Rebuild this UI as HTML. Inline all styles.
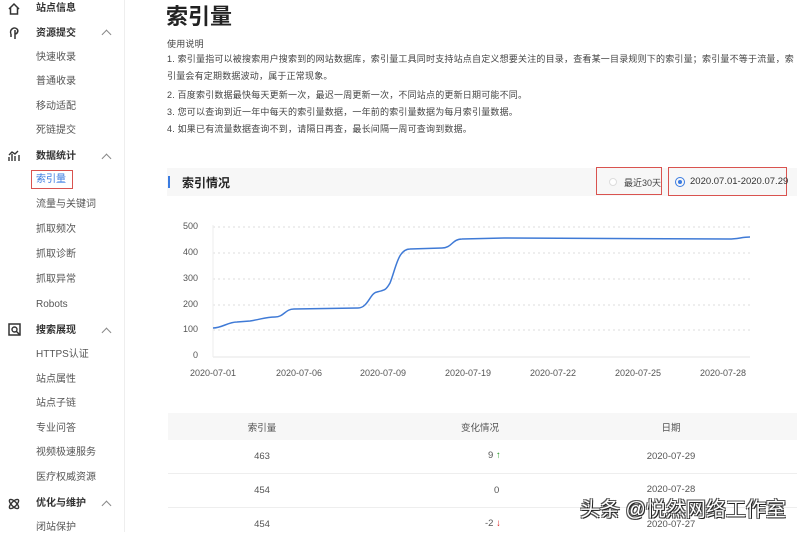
<!DOCTYPE html>
<html><head><meta charset="utf-8"><style>
*{margin:0;padding:0;box-sizing:border-box}
body{width:800px;height:532px;overflow:hidden;background:#fff;font-family:"Liberation Sans","Noto Sans CJK SC",sans-serif;color:#333;position:relative}
.a{position:absolute;white-space:nowrap}
.sb{position:absolute;left:0;top:0;width:125px;height:532px;border-right:1px solid #eee}
.it{position:absolute;left:36px;font-size:10px;color:#555;line-height:12px}
.g{font-weight:bold;color:#333}
.ch{position:absolute;left:103px;width:7px;height:7px;border-left:1px solid #888;border-top:1px solid #888;transform:rotate(45deg)}
.ins{font-size:9px;color:#444;left:167px;letter-spacing:0.2px}
.yl{font-size:9px;color:#555;text-align:right;width:30px;left:168px}
.xl{font-size:9px;color:#555;width:60px;text-align:center}
.td{font-size:9.5px;color:#555;width:80px;text-align:center}
</style></head><body>
<div class="sb">
<svg class="a" style="left:7px;top:2px" width="14" height="14" viewBox="0 0 14 14"><path d="M2 7 L7 2 L12 7 M3.5 6 V12 H10.5 V6" fill="none" stroke="#333" stroke-width="1.5"/></svg>
<div class="it g" style="top:3px">站点信息</div>
<svg class="a" style="left:8px;top:26px" width="14" height="14" viewBox="0 0 14 14"><path d="M3 8 C1 4 6 0 9 3 C11 5 9 8 7 8 M7 4 V13 M3 8 V11" fill="none" stroke="#333" stroke-width="1.5"/></svg>
<div class="it g" style="top:28px">资源提交</div><div class="ch" style="top:31px"></div>
<div class="it" style="top:52px">快速收录</div>
<div class="it" style="top:76px">普通收录</div>
<div class="it" style="top:101px">移动适配</div>
<div class="it" style="top:125px">死链提交</div>
<svg class="a" style="left:8px;top:150px" width="14" height="12" viewBox="0 0 14 12"><path d="M1 11 V7 M4 11 V4 M7 11 V6 M11 11 V5 M1 5 L4 2 L7 4 L10 1" fill="none" stroke="#333" stroke-width="1.4"/></svg>
<div class="it g" style="top:151px">数据统计</div><div class="ch" style="top:155px"></div>
<div class="a" style="left:31px;top:170px;width:42px;height:19px;border:1px solid #d9534f"></div>
<div class="it" style="top:174px;color:#3a7be0">索引量</div>
<div class="it" style="top:199px">流量与关键词</div>
<div class="it" style="top:224px">抓取频次</div>
<div class="it" style="top:249px">抓取诊断</div>
<div class="it" style="top:274px">抓取异常</div>
<div class="it" style="top:299px">Robots</div>
<svg class="a" style="left:8px;top:323px" width="14" height="14" viewBox="0 0 14 14"><rect x="1" y="1" width="11" height="11" fill="none" stroke="#333" stroke-width="1.5"/><circle cx="6.5" cy="6.5" r="2.5" fill="none" stroke="#333" stroke-width="1.4"/><path d="M8.5 8.5 L12 12" stroke="#333" stroke-width="1.5"/></svg>
<div class="it g" style="top:325px">搜索展现</div><div class="ch" style="top:329px"></div>
<div class="it" style="top:349px">HTTPS认证</div>
<div class="it" style="top:374px">站点属性</div>
<div class="it" style="top:398px">站点子链</div>
<div class="it" style="top:423px">专业问答</div>
<div class="it" style="top:447px">视频极速服务</div>
<div class="it" style="top:472px">医疗权威资源</div>
<svg class="a" style="left:7px;top:497px" width="14" height="14" viewBox="0 0 14 14"><ellipse cx="7" cy="7" rx="6" ry="2.5" transform="rotate(45 7 7)" fill="none" stroke="#333" stroke-width="1.4"/><ellipse cx="7" cy="7" rx="6" ry="2.5" transform="rotate(-45 7 7)" fill="none" stroke="#333" stroke-width="1.4"/></svg>
<div class="it g" style="top:498px">优化与维护</div><div class="ch" style="top:502px"></div>
<div class="it" style="top:522px">闭站保护</div>
</div>

<div class="a" style="left:166px;top:-1px;font-size:22px;font-weight:bold;color:#222">索引量</div>
<div class="a ins" style="top:37px">使用说明</div>
<div class="a ins" style="top:52px">1. 索引量指可以被搜索用户搜索到的网站数据库，索引量工具同时支持站点自定义想要关注的目录，查看某一目录规则下的索引量；索引量不等于流量，索</div>
<div class="a ins" style="top:69px">引量会有定期数据波动，属于正常现象。</div>
<div class="a ins" style="top:88px">2. 百度索引数据最快每天更新一次，最迟一周更新一次，不同站点的更新日期可能不同。</div>
<div class="a ins" style="top:105px">3. 您可以查询到近一年中每天的索引量数据，一年前的索引量数据为每月索引量数据。</div>
<div class="a ins" style="top:122px">4. 如果已有流量数据查询不到，请隔日再查，最长间隔一周可查询到数据。</div>

<div class="a" style="left:167px;top:168px;width:630px;height:28px;background:#f7f7f7"></div>
<div class="a" style="left:168px;top:176px;width:2px;height:12px;background:#3a7be0"></div>
<div class="a" style="left:182px;top:174px;font-size:12px;font-weight:bold;color:#222">索引情况</div>
<div class="a" style="left:596px;top:167px;width:66px;height:28px;border:1px solid #d9534f"></div>
<div class="a" style="left:609px;top:178px;width:8px;height:8px;border:1px solid #ddd;border-radius:50%;background:#fff"></div>
<div class="a" style="left:624px;top:176px;font-size:9px;color:#444">最近30天</div>
<div class="a" style="left:668px;top:167px;width:119px;height:29px;border:1px solid #d9534f"></div>
<div class="a" style="left:675px;top:177px;width:10px;height:10px;border:1px solid #3a7be0;border-radius:50%"></div>
<div class="a" style="left:678px;top:180px;width:4px;height:4px;background:#3a7be0;border-radius:50%"></div>
<div class="a" style="left:690px;top:176px;font-size:9.5px;color:#333">2020.07.01-2020.07.29</div>

<svg class="a" style="left:0;top:0" width="800" height="400">
<g stroke="#ddd" stroke-dasharray="2,3" stroke-width="1">
<line x1="213" y1="227" x2="750" y2="227"/><line x1="213" y1="253" x2="750" y2="253"/><line x1="213" y1="279" x2="750" y2="279"/><line x1="213" y1="305" x2="750" y2="305"/><line x1="213" y1="330" x2="750" y2="330"/></g>
<line x1="213" y1="357" x2="750" y2="357" stroke="#e6e6e6"/>
<line x1="213" y1="225" x2="213" y2="357" stroke="#eee"/>
<path d="M213 328 C222 328 228 322 237 322 L250 321 C262 319 266 317 275 317 C284 317 285 309 294 309 L358 308 C368 308 370 293 377 292 C385 290 386 290 390 283 C396 268 398 249 410 249 L442 248 C452 248 452 239 462 239 L504 238 L729 239 C738 239 742 237 750 237" fill="none" stroke="#3f7ad6" stroke-width="1.5"/>
</svg>
<div class="a yl" style="top:221px">500</div>
<div class="a yl" style="top:247px">400</div>
<div class="a yl" style="top:273px">300</div>
<div class="a yl" style="top:299px">200</div>
<div class="a yl" style="top:324px">100</div>
<div class="a yl" style="top:350px">0</div>
<div class="a xl" style="left:183px;top:368px">2020-07-01</div>
<div class="a xl" style="left:269px;top:368px">2020-07-06</div>
<div class="a xl" style="left:353px;top:368px">2020-07-09</div>
<div class="a xl" style="left:438px;top:368px">2020-07-19</div>
<div class="a xl" style="left:523px;top:368px">2020-07-22</div>
<div class="a xl" style="left:608px;top:368px">2020-07-25</div>
<div class="a xl" style="left:693px;top:368px">2020-07-28</div>

<div class="a" style="left:168px;top:413px;width:629px;height:27px;background:#f7f7f7"></div>
<div class="a td" style="left:222px;top:420px">索引量</div>
<div class="a td" style="left:440px;top:420px">变化情况</div>
<div class="a td" style="left:631px;top:420px">日期</div>
<div class="a" style="left:168px;top:473px;width:629px;height:1px;background:#eee"></div>
<div class="a" style="left:168px;top:507px;width:629px;height:1px;background:#eee"></div>
<div class="a td" style="left:222px;top:451px">463</div>
<div class="a" style="left:488px;top:450px;font-size:9.5px;color:#555">9 <span style="color:#2a9a2a;font-weight:bold">↑</span></div>
<div class="a td" style="left:631px;top:451px">2020-07-29</div>
<div class="a td" style="left:222px;top:485px">454</div>
<div class="a" style="left:494px;top:485px;font-size:9.5px;color:#555">0</div>
<div class="a td" style="left:631px;top:484px">2020-07-28</div>
<div class="a td" style="left:222px;top:519px">454</div>
<div class="a" style="left:485px;top:518px;font-size:9.5px;color:#555">-2 <span style="color:#d22;font-weight:bold">↓</span></div>
<div class="a td" style="left:631px;top:519px">2020-07-27</div>

<div class="a" style="left:580px;top:493px;font-size:20px;color:#fff;text-shadow:1px 1px 0 #222,-1px -1px 0 #555,1px -1px 0 #555,-1px 1px 0 #555">头条 @悦然网络工作室</div>
</body></html>
